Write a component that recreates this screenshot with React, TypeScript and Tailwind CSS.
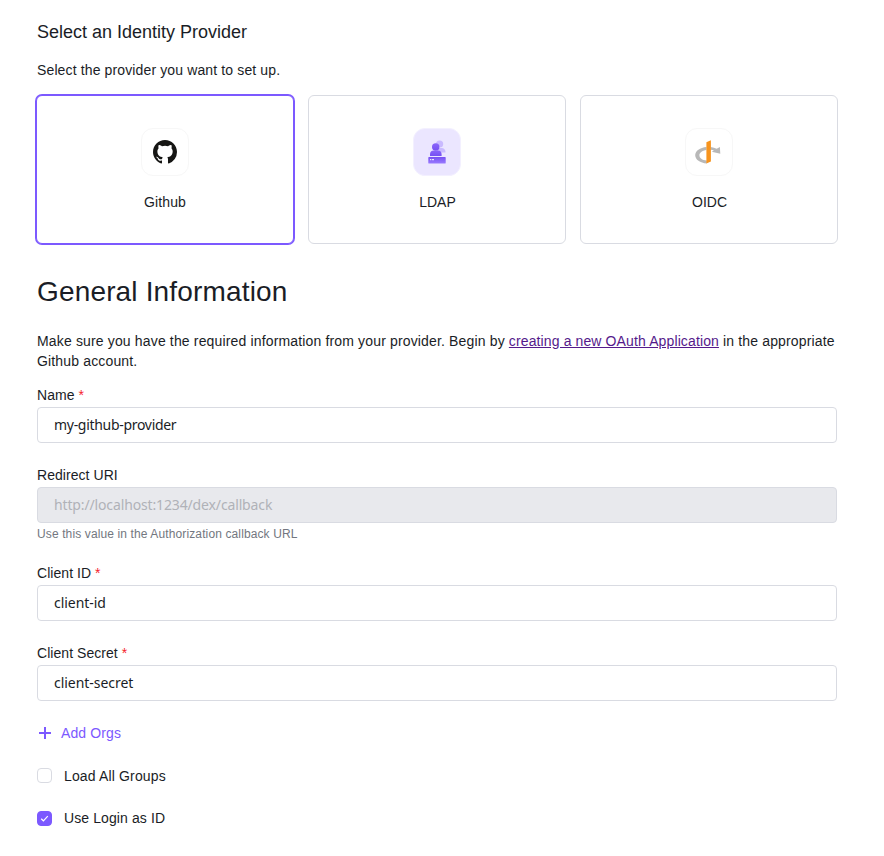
import type { ReactNode } from 'react';

function GithubLogo() {
  return (
    <svg width="24" height="24" viewBox="0 0 16 16" fill="#161614">
      <path d="M8 0C3.58 0 0 3.58 0 8c0 3.54 2.29 6.53 5.47 7.59.4.07.55-.17.55-.38 0-.19-.01-.82-.01-1.49-2.01.37-2.53-.49-2.69-.94-.09-.23-.48-.94-.82-1.13-.28-.15-.68-.52-.01-.53.63-.01 1.08.58 1.23.82.72 1.21 1.87.87 2.33.66.07-.52.28-.87.51-1.07-1.78-.2-3.64-.89-3.64-3.95 0-.87.31-1.59.82-2.15-.08-.2-.36-1.02.08-2.12 0 0 .67-.21 2.2.82a7.6 7.6 0 0 1 4 0c1.53-1.04 2.2-.82 2.2-.82.44 1.1.16 1.92.08 2.12.51.56.82 1.27.82 2.15 0 3.07-1.87 3.75-3.65 3.95.29.25.54.73.54 1.48 0 1.07-.01 1.93-.01 2.2 0 .21.15.46.55.38A8 8 0 0 0 16 8c0-4.42-3.58-8-8-8z" />
    </svg>
  );
}

function LdapLogo() {
  return (
    <svg width="24" height="24" viewBox="0 0 24 24">
      <defs>
        <linearGradient id="person" x1="0" y1="0" x2="0" y2="1">
          <stop offset="0" stopColor="#8a66fa" />
          <stop offset="1" stopColor="#7650f2" />
        </linearGradient>
        <linearGradient id="server" x1="0" y1="0" x2="0" y2="1">
          <stop offset="0" stopColor="#7650f2" />
          <stop offset="1" stopColor="#9a7bff" />
        </linearGradient>
      </defs>
      <circle cx="14.6" cy="4" r="3.6" fill="#c9baff" />
      <path d="M12 12.5V8h4.5a4 4 0 0 1 4 4.5z" fill="#c9baff" />
      <circle cx="10.7" cy="7" r="3.7" fill="url(#person)" />
      <path d="M5 15.9v-1.6a3.8 3.8 0 0 1 3.8-3.8h4a3.8 3.8 0 0 1 3.8 3.8v1.6z" fill="url(#person)" />
      <rect x="3.3" y="17" width="17.4" height="6.6" rx="0.7" fill="url(#server)" />
      <path d="M5 19.7h1.2M6.8 19.7h2.2" stroke="#ffffff" strokeWidth="1" />
    </svg>
  );
}

function OidcLogo() {
  return (
    <svg width="26" height="24" viewBox="0 0 26 24" className="mr-0.5 shrink-0">
      <path d="M11.5 7C5 7.6 .2 10.9.2 15.2c0 4.4 4.9 7.7 11.6 8.2v-2.8c-4.7-.6-7.4-2.7-7.4-5.4 0-2.6 2.6-4.6 7.1-5.3zM15.6 7c2.4.3 4.4.9 6.1 1.8l3.2-1.7.4 6.6-8.5-2 2.1-1.1c-1-.5-2-.7-3.3-.9z" fill="#b8b8b8" />
      <path d="M11.4 2.2 15.9.2v21.2l-4.5 2z" fill="#f7941e" />
    </svg>
  );
}

function ProviderCard({ label, selected, tinted, children }: { label: string; selected?: boolean; tinted?: boolean; children: ReactNode }) {
  return (
    <button
      type="button"
      className={`flex h-[149px] flex-1 flex-col items-center rounded-[6px] border bg-white pt-8 ${
        selected ? 'border-[#7c59ff] ring-1 ring-[#7c59ff]' : 'border-[#d9dbe2]'
      }`}
    >
      <span
        className={`flex size-12 items-center justify-center rounded-[12px] border ${
          tinted ? 'border-[#f3f0ff] bg-[#ebe6ff]' : 'border-[#f7f7f7] bg-white'
        }`}
      >
        {children}
      </span>
      <span className={`mt-4 leading-5 ${selected ? 'tracking-[0.1px]' : 'pl-px'}`}>{label}</span>
    </button>
  );
}

function Field({ label, value, tracking, required, disabled, help }: { label: string; value: string; tracking: string; required?: boolean; disabled?: boolean; help?: string }) {
  return (
    <label className="block">
      <span className="block leading-5 tracking-[0.05px]">
        {label}
        {required && <span className="text-[#f5222d]"> *</span>}
      </span>
      <input
        className={`mt-0.5 block h-9 w-full rounded-[4px] border border-[#d9dbe2] px-4 pb-0.5 font-['Noto_Sans',sans-serif] text-[14px] ${tracking} ${
          disabled ? 'bg-[#e8e9ed] text-[#b0b2b8]' : 'bg-white text-[#1a1d26]'
        }`}
        defaultValue={value}
        disabled={disabled}
      />
      {help && <span className="mt-[3px] block text-[12px] leading-4 tracking-[0.12px] text-[#737780]">{help}</span>}
    </label>
  );
}

function Checkbox({ label, checked }: { label: string; checked?: boolean }) {
  return (
    <div className="flex h-5 gap-3">
      <span
        className={`flex size-[15px] items-center justify-center rounded-[4px] border ${
          checked ? 'mt-[3px] border-[#7c59ff] bg-[#7c59ff]' : 'mt-0.5 border-[#d9dbe2] bg-white'
        }`}
      >
        {checked && (
          <svg width="9" height="9" viewBox="0 0 9 9" fill="none" stroke="#ffffff" strokeWidth="1.2">
            <path d="M1.2 4.8 3.4 6.8 7.8 2.2" />
          </svg>
        )}
      </span>
      <span className={checked ? 'tracking-[0.1px]' : 'tracking-[0.15px]'}>{label}</span>
    </div>
  );
}

export default function App() {
  return (
    <main className="min-h-[856px] w-[884px] bg-white pt-[18px] pr-[47px] pl-[37px] font-['Liberation_Sans',Arial,sans-serif] text-[14px] leading-5 text-[#1a1d26]">
      <h2 className="text-[18px] leading-7">Select an Identity Provider</h2>
      <p className="mt-3.5 tracking-[0.13px]">Select the provider you want to set up.</p>
      <div className="-mr-px -ml-px mt-[15px] flex gap-3.5">
        <ProviderCard label="Github" selected>
          <GithubLogo />
        </ProviderCard>
        <ProviderCard label="LDAP" tinted>
          <LdapLogo />
        </ProviderCard>
        <ProviderCard label="OIDC">
          <OidcLogo />
        </ProviderCard>
      </div>
      <h1 className="mt-[27px] text-[28px] leading-[42px] tracking-[0.16px]">General Information</h1>
      <p className="mt-[18px] tracking-[0.153px]">
        Make sure you have the required information from your provider. Begin by{' '}
        <a href="#" className="tracking-[0.12px] text-[#551a8b] underline">creating a new OAuth Application</a> in the appropriate Github account.
      </p>
      <form className="mt-3.5">
        <Field label="Name" value="my-github-provider" tracking="tracking-[-0.3px]" required />
        <div className="mt-[22px]">
          <Field label="Redirect URI" value="http://localhost:1234/dex/callback" tracking="tracking-[-0.14px]" disabled help="Use this value in the Authorization callback URL" />
        </div>
        <div className="mt-[21px]">
          <Field label="Client ID" value="client-id" tracking="tracking-[-0.05px]" required />
        </div>
        <div className="mt-[22px]">
          <Field label="Client Secret" value="client-secret" tracking="tracking-[-0.04px]" required />
        </div>
        <button type="button" className="mt-[22px] flex items-center gap-2 leading-5 tracking-[0.12px] text-[#7c59ff]">
          <svg width="16" height="16" viewBox="0 0 16 16" stroke="currentColor" strokeWidth="2">
            <path d="M8 2v12M2 8h12" />
          </svg>
          Add Orgs
        </button>
        <div className="mt-[23px] flex flex-col gap-[22px]">
          <Checkbox label="Load All Groups" />
          <Checkbox label="Use Login as ID" checked />
        </div>
      </form>
    </main>
  );
}
